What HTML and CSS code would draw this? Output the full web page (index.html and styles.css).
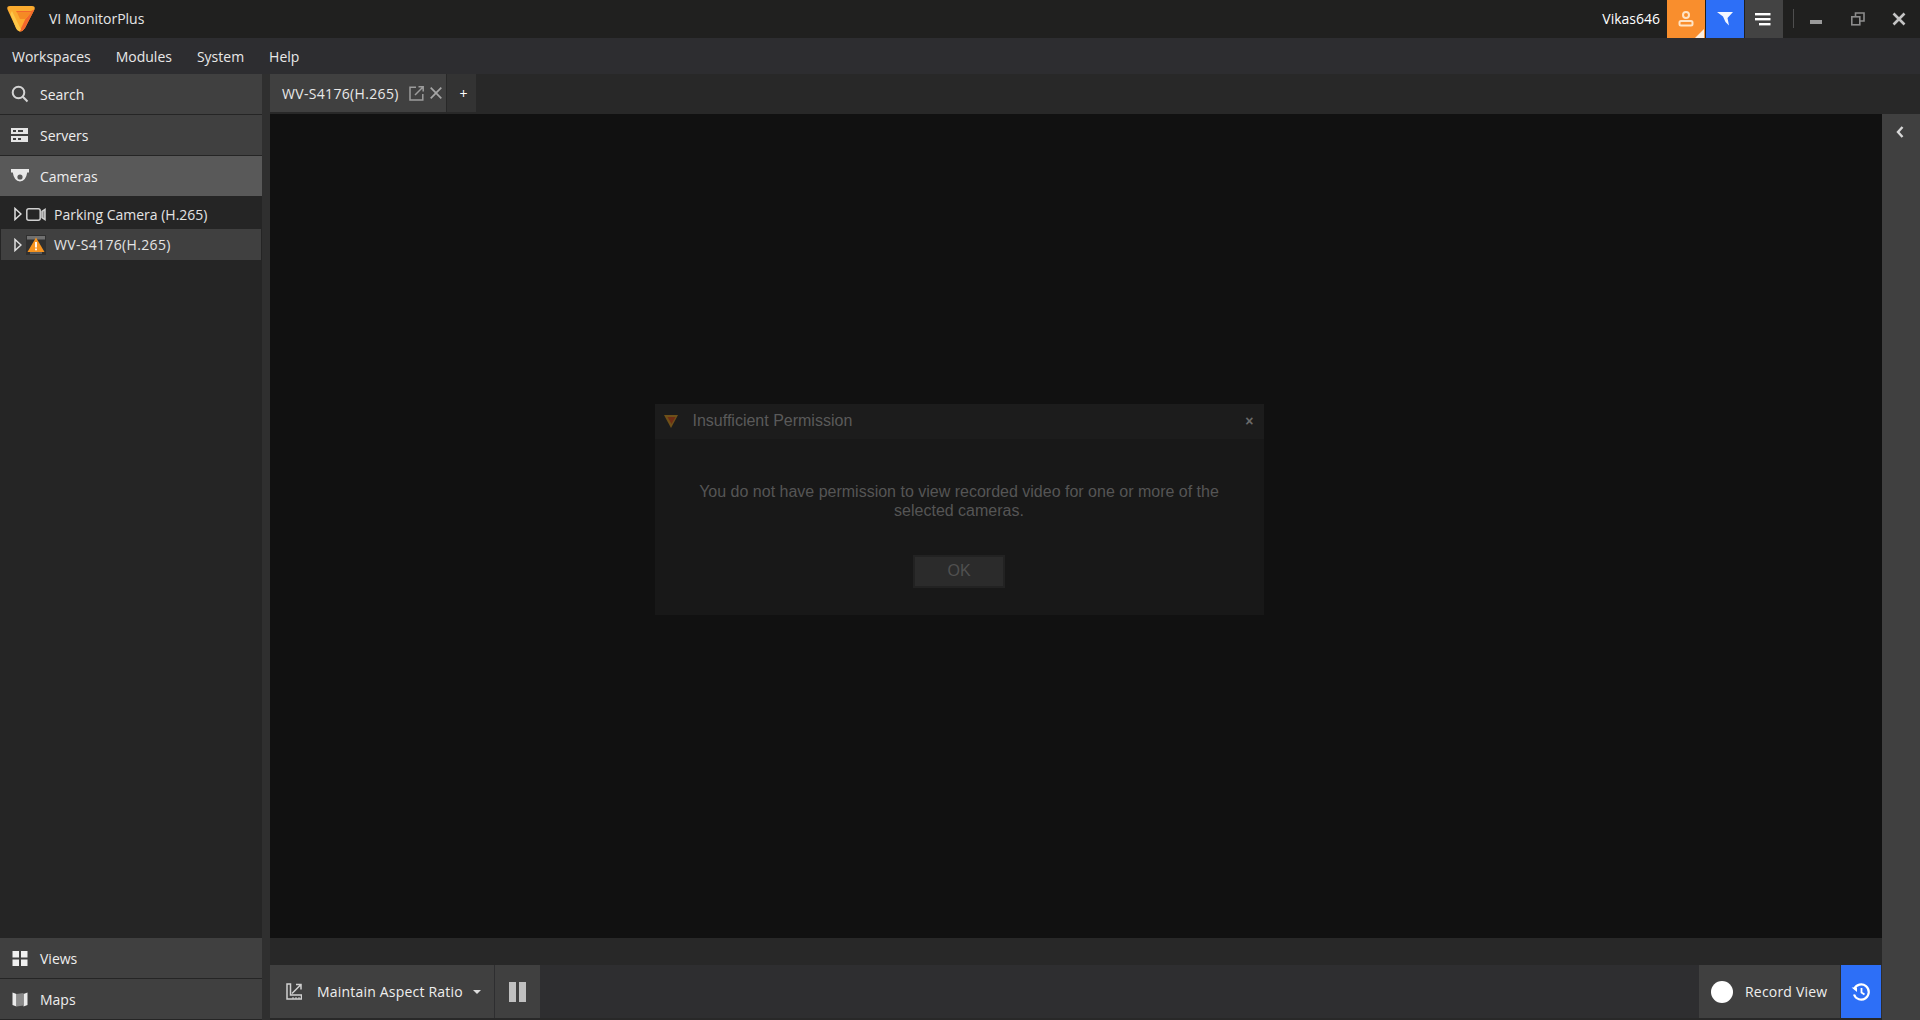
FILE: index.html
```html
<!DOCTYPE html>
<html lang="en">
<head>
    <meta charset="UTF-8">
    <title>VI MonitorPlus</title>
    <link rel="stylesheet" href="styles.css">
</head>
<body>
    <header class="titlebar">
        <svg class="logo" viewBox="0 0 28 26">
            <path d="M3 0 H25 Q28.6 0 27.5 3.5 L18 22 Q15.5 26 12.5 25.4 Q10 25 9 22 L.5 3.5 Q-.6 0 3 0Z" fill="#fbab2f"/>
            <path d="M27.6 3.2 L18 22 Q15.5 26 12.5 25.4 L18.4 13 L24 6.5 H10 L9 5 H24Z" fill="#f2682c"/>
            <path d="M10 6.5 H24 L18.4 13 H13Z" fill="#f58a24"/>
            <path d="M5 5 L14 23.5 L12.6 25.2 Q10 25 9 22 L3.4 8Z" fill="#fdc748"/>
        </svg>
        <span class="app-name">VI MonitorPlus</span>
        <span class="user-name">Vikas646</span>
        <button class="bar-btn orange">
            <svg viewBox="0 0 20 20" width="20" height="20" fill="none" stroke="#ffe3c4" stroke-width="2">
                <circle cx="10" cy="6" r="3"/>
                <rect x="3.5" y="12" width="13" height="4.5" rx="1.5"/>
            </svg>
            <span class="corner"></span>
        </button>
        <button class="bar-btn blue">
            <svg viewBox="0 0 18 18" width="18" height="18"><path d="M1 2 H17 L11.5 8 L13 15.5 L9.5 12 L7 6.5Z" fill="#f4f7ff"/></svg>
        </button>
        <button class="bar-btn grey">
            <svg viewBox="0 0 18 14" width="18" height="14" fill="#fff"><rect width="15.5" height="2.4" y="1"/><rect width="15.5" height="2.4" y="6"/><rect x="4" width="11.5" height="2.4" y="11"/></svg>
        </button>
        <span class="bar-sep"></span>
        <div class="win-btn">
            <svg viewBox="0 0 14 14" width="14" height="14"><rect x="0" y="8" width="12" height="4" fill="#9a9a9a"/></svg>
        </div>
        <div class="win-btn">
            <svg viewBox="0 0 14 14" width="14" height="14" fill="none" stroke="#8c8c8c" stroke-width="1.6"><rect x=".8" y="4.8" width="8" height="8"/><path d="M4.5 4.5 V1 H13 V9 H9"/></svg>
        </div>
        <div class="win-btn">
            <svg viewBox="0 0 14 14" width="14" height="14" fill="none" stroke="#c4c4c4" stroke-width="2.6"><path d="M1.5 1.5 L12.5 12.5 M12.5 1.5 L1.5 12.5"/></svg>
        </div>
    </header>

    <nav class="menubar">
        <span>Workspaces</span>
        <span>Modules</span>
        <span>System</span>
        <span>Help</span>
    </nav>

    <div class="main">
        <aside class="sidebar">
            <div class="side-btn">
                <svg viewBox="0 0 18 18" width="18" height="18" fill="none" stroke="#d4d4d4" stroke-width="2"><circle cx="7.5" cy="7.5" r="5.8"/><path d="M11.8 11.8 L16.5 16.5"/></svg>
                <span>Search</span>
            </div>
            <div class="side-btn">
                <svg viewBox="0 0 18 14" width="18" height="14"><path d="M0 0 H17 V6 H0Z M0 8 H17 V14 H0Z" fill="#e4e4e4"/><path d="M2 2 H5 V4 H2Z M2 10 H5 V12 H2Z M7 2 H12 V4 H7Z M7 10 H10 V12 H7Z" fill="#404040"/></svg>
                <span>Servers</span>
            </div>
            <div class="side-btn active">
                <svg viewBox="0 0 18 14" width="18" height="14" fill="#e8e8e8"><path d="M0 0 H18 V3.5 H16.2 Q15 12 9 12.5 Q3 12 1.8 3.5 H0Z"/><circle cx="9" cy="8" r="2.6" fill="#595959"/></svg>
                <span>Cameras</span>
            </div>

            <ul class="tree">
                <li class="tree-row first">
                    <svg class="arrow" viewBox="0 0 8 14" width="8" height="14"><path d="M1 1.5 L7 7 L1 12.5Z" fill="none" stroke="#e0e0e0" stroke-width="1.5"/></svg>
                    <svg viewBox="0 0 20 13" width="20" height="13" fill="none" stroke="#d0d0d0" stroke-width="1.5"><rect x=".8" y=".8" width="13.4" height="11.4" rx="2"/><path d="M19 1.5 V11.5 L16 9.5 V3.5Z" fill="#909090"/></svg>
                    <span>Parking Camera (H.265)</span>
                </li>
                <li class="tree-row selected">
                    <svg class="arrow" viewBox="0 0 8 14" width="8" height="14"><path d="M1 1.5 L7 7 L1 12.5Z" fill="none" stroke="#e0e0e0" stroke-width="1.5"/></svg>
                    <svg viewBox="0 0 20 20" width="20" height="20">
                        <rect width="20" height="20" fill="#303030"/>
                        <rect x="1" y="1" width="18" height="3.5" fill="#707070"/>
                        <path d="M4 17 H16 V19 H4Z" fill="#5c5c5c"/>
                        <path d="M10 2.5 L18.5 17 H1.5Z" fill="#f7931e"/>
                        <rect x="9.1" y="7" width="1.8" height="5.5" fill="#fff"/>
                        <rect x="9.1" y="13.5" width="1.8" height="1.8" fill="#fff"/>
                    </svg>
                    <span class="wide-label">WV-S4176(H.265)</span>
                </li>
            </ul>

            <div class="side-bottom">
                <div class="side-btn">
                    <svg viewBox="0 0 15 15" width="15" height="15" fill="#f0f0f0"><rect width="6.5" height="6.5"/><rect x="8.5" width="6.5" height="6.5"/><rect y="8.5" width="6.5" height="6.5"/><rect x="8.5" y="8.5" width="6.5" height="6.5"/></svg>
                    <span>Views</span>
                </div>
                <div class="side-btn">
                    <svg viewBox="0 0 15 15" width="15" height="15" fill="#ececec"><path d="M0 .5 L4 2 V14.5 L0 13Z M11 2 L15 .5 V13 L11 14.5Z"/><path d="M4 2 L11 1 V13.5 L4 14.5Z" fill="#8a8a8a"/></svg>
                    <span>Maps</span>
                </div>
            </div>
        </aside>

        <section class="content">
            <div class="tabbar">
                <div class="tab">
                    <span class="tab-label wide-label">WV-S4176(H.265)</span>
                    <svg viewBox="0 0 15 15" width="15" height="15" fill="none" stroke="#9c9c9c" stroke-width="1.5"><path d="M7 1.2 H1 V14 H13.8 V8"/><path d="M6 9 L14 1 M9.5 .8 H14.2 V5.5"/></svg>
                    <svg viewBox="0 0 12 12" width="12" height="12" fill="none" stroke="#a6a6a6" stroke-width="1.7"><path d="M.7 .7 L11.3 11.3 M11.3 .7 L.7 11.3"/></svg>
                </div>
                <div class="tab-add">+</div>
            </div>
            <div class="stage">
                <div class="stage-left">
                    <div class="video"></div>
                    <div class="strip"></div>
                    <div class="toolbar">
                        <div class="tool-btn aspect">
                            <svg viewBox="0 0 16 17" width="16" height="17" fill="none" stroke="#d0d0d0" stroke-width="1.5"><path d="M1 1 V16 H15.5 V12 H4.5 V1Z"/><path d="M6 10.5 L14.5 2 M10 1.5 H15 V6.5"/><path d="M7 16 V14 M10 16 V14 M13 16 V14" stroke-width="1"/></svg>
                            <span>Maintain Aspect Ratio</span>
                            <i class="caret"></i>
                        </div>
                        <div class="tool-btn pause"><i></i><i></i></div>
                        <div class="tool-fill"></div>
                        <div class="tool-btn record">
                            <i class="dot"></i>
                            <span>Record View</span>
                        </div>
                        <div class="tool-btn history">
                            <svg viewBox="0 0 20 20" width="20" height="20" fill="none" stroke="#fff" stroke-width="2.2"><path d="M3.2 7 A7.6 7.6 0 1 1 3 12.5"/><path d="M10.5 6 V10.5 L13.5 12.5" stroke-width="1.8"/><path d="M.6 5.5 H6 V10 Z" fill="#fff" stroke="none"/></svg>
                        </div>
                    </div>
                </div>
                <div class="rail">
                    <svg viewBox="0 0 8 12" width="8" height="12" fill="none" stroke="#d8d8d8" stroke-width="2.4"><path d="M6.5 1 L2 6 L6.5 11"/></svg>
                </div>
            </div>
        </section>
    </div>

    <div class="overlay">
        <div class="dialog">
            <div class="dialog-head">
                <svg viewBox="0 0 14 14" width="14" height="14"><path d="M0 1 H14 L7 14Z" fill="#6e5019"/><path d="M3.5 3 H11.5 L7.5 10Z" fill="#6e2c14"/></svg>
                <span class="dialog-title">Insufficient Permission</span>
                <span class="dialog-close">×</span>
            </div>
            <div class="dialog-body">
                <p>You do not have permission to view recorded video for one or more of the selected cameras.</p>
                <button class="ok-btn">OK</button>
            </div>
        </div>
    </div>
</body>
</html>
```

FILE: styles.css
```css
* {
    box-sizing: border-box;
}
html, body {
    height: 100%;
}
body {
    margin: 0;
    display: flex;
    flex-direction: column;
    background-color: #252525;
    color: #fff;
    font-family: "Open Sans", "Noto Sans", Arial, sans-serif;
    font-size: 14px;
    overflow: hidden;
}
ul {
    list-style: none;
    margin: 0;
    padding: 0;
}
.wide-label {
    letter-spacing: 0.33px;
}

/* title bar */
.titlebar {
    height: 38px;
    flex: none;
    display: flex;
    align-items: center;
    background-color: #20201f;
    padding-left: 7px;
    padding-right: 1px;
    padding-bottom: 1px;
}
.logo {
    width: 28px;
    height: 26px;
}
.app-name {
    margin-left: 14px;
    font-size: 14px;
    color: #e6e6e6;
}
.user-name {
    margin-left: auto;
    margin-right: 7px;
    font-size: 14px;
}
.bar-btn {
    position: relative;
    width: 38px;
    height: 38px;
    margin-right: 1px;
    margin-bottom: -1px;
    border: none;
    padding: 0;
    display: flex;
    align-items: center;
    justify-content: center;
}
.orange {
    background-color: #f98e2d;
}
.blue {
    background-color: #2d6ff7;
}
.grey {
    background-color: #434343;
}
.corner {
    position: absolute;
    right: 1px;
    bottom: 0;
    border-style: solid;
    border-width: 0 0 9px 9px;
    border-color: transparent transparent #fbeee0 transparent;
}
.bar-sep {
    width: 1px;
    height: 19px;
    margin-left: 9px;
    margin-right: 2px;
    background-color: #4e4e4e;
}
.win-btn {
    width: 41px;
    height: 38px;
    display: flex;
    align-items: center;
    justify-content: center;
}

/* menu */
.menubar {
    height: 36px;
    flex: none;
    display: flex;
    align-items: center;
    gap: 25px;
    padding-left: 12px;
    background-color: #2d2d30;
    color: #e8e8e8;
}

.main {
    flex: 1;
    display: flex;
    min-height: 0;
}

/* left panel */
.sidebar {
    width: 262px;
    flex: none;
    display: flex;
    flex-direction: column;
    padding-bottom: 1px;
    background-color: #252525;
}
.side-btn {
    height: 40px;
    flex: none;
    display: flex;
    align-items: center;
    margin-bottom: 1px;
    background-color: #404040;
    color: #eee;
}
.side-btn svg {
    width: 18px;
    margin-left: 11px;
    margin-right: 11px;
}
.side-btn.active {
    background-color: #595959;
    margin-bottom: 0;
}
.tree-row {
    height: 33px;
    display: flex;
    align-items: center;
    padding-left: 14px;
    color: #e4e4e4;
}
.tree-row.first {
    padding-top: 3px;
}
.tree-row .arrow {
    margin-right: 4px;
}
.tree-row span {
    margin-left: 8px;
}
.tree-row.selected {
    height: 31px;
    margin-left: 1px;
    margin-right: 1px;
    padding-left: 13px;
    background-color: #404040;
}
.side-bottom {
    margin-top: auto;
}
.side-bottom .side-btn:last-child {
    margin-bottom: 0;
}

/* content */
.content {
    flex: 1;
    display: flex;
    flex-direction: column;
    min-width: 0;
    margin-left: 8px;
    background-color: #282828;
    box-shadow: -8px 0 0 #2f2f2f;
}
.tabbar {
    height: 40px;
    flex: none;
    display: flex;
    padding-bottom: 2px;
}
.tab {
    width: 176px;
    display: flex;
    align-items: center;
    padding-left: 12px;
    background-color: #404040;
    color: #e8e8e8;
}
.tab-label {
    margin-right: 10px;
}
.tab svg + svg {
    margin-left: 6px;
}
.tab-add {
    width: 29px;
    margin-left: 1px;
    padding-left: 4px;
    display: flex;
    align-items: center;
    justify-content: center;
    background-color: #333;
    font-size: 14px;
}
.stage {
    flex: 1;
    display: flex;
    min-height: 0;
}
.stage-left {
    flex: 1;
    display: flex;
    flex-direction: column;
    min-width: 0;
}
.video {
    flex: 1;
    background-color: #111;
}
.strip {
    height: 27px;
    flex: none;
    background-color: #282828;
}
.toolbar {
    height: 53px;
    flex: none;
    margin-bottom: 2px;
    display: flex;
    background-color: #2e2e30;
}
.tool-btn {
    display: flex;
    align-items: center;
    flex: none;
    background-color: #404040;
    color: #eee;
}
.aspect {
    width: 224px;
    padding-left: 16px;
}
.aspect span {
    margin-left: 15px;
    white-space: nowrap;
    letter-spacing: 0.2px;
}
.caret {
    margin-left: 10px;
    border-style: solid;
    border-width: 4px 4.5px 0 4.5px;
    border-color: #ddd transparent transparent transparent;
}
.pause {
    width: 45px;
    margin-left: 1px;
    justify-content: center;
    gap: 3px;
}
.pause i {
    width: 7px;
    height: 20px;
    background-color: #c0c0c0;
}
.tool-fill {
    flex: 1;
}
.record {
    width: 141px;
    padding-left: 12px;
}
.dot {
    width: 22px;
    height: 22px;
    border-radius: 50%;
    background-color: #fff;
}
.record span {
    margin-left: 12px;
    letter-spacing: 0.2px;
}
.history {
    width: 40px;
    margin-left: 1px;
    margin-right: 1px;
    justify-content: center;
    background-color: #2d6ff7;
}
.rail {
    width: 38px;
    flex: none;
    display: flex;
    justify-content: center;
    align-items: flex-start;
    padding-top: 12px;
    padding-right: 2px;
    background-color: #404040;
}

/* dialog */
.overlay {
    position: fixed;
    inset: 0;
    padding: 0 2px 2px 0;
    display: flex;
    align-items: center;
    justify-content: center;
}
.dialog {
    width: 609px;
    height: 211px;
    background-color: #181818;
    display: flex;
    flex-direction: column;
    font-family: "Liberation Sans", Arial, sans-serif;
}
.dialog-head {
    height: 35px;
    flex: none;
    display: flex;
    align-items: center;
    padding: 0 10px 0 9px;
    background-color: #1c1c1c;
}
.dialog-title {
    margin-left: 15px;
    font-size: 16px;
    color: #5a5a5a;
}
.dialog-close {
    margin-left: auto;
    font-size: 14px;
    font-weight: bold;
    color: #6a6a6a;
}
.dialog-body {
    flex: 1;
    display: flex;
    flex-direction: column;
    align-items: center;
}
.dialog-body p {
    margin: 43px 0 0;
    width: 540px;
    text-align: center;
    font-size: 16px;
    line-height: 19px;
    color: #555;
}
.ok-btn {
    width: 92px;
    height: 33px;
    margin-top: 35px;
    border: 2px solid #222;
    background-color: #2b2b2b;
    color: #505050;
    font-family: inherit;
    font-size: 16px;
}
```
